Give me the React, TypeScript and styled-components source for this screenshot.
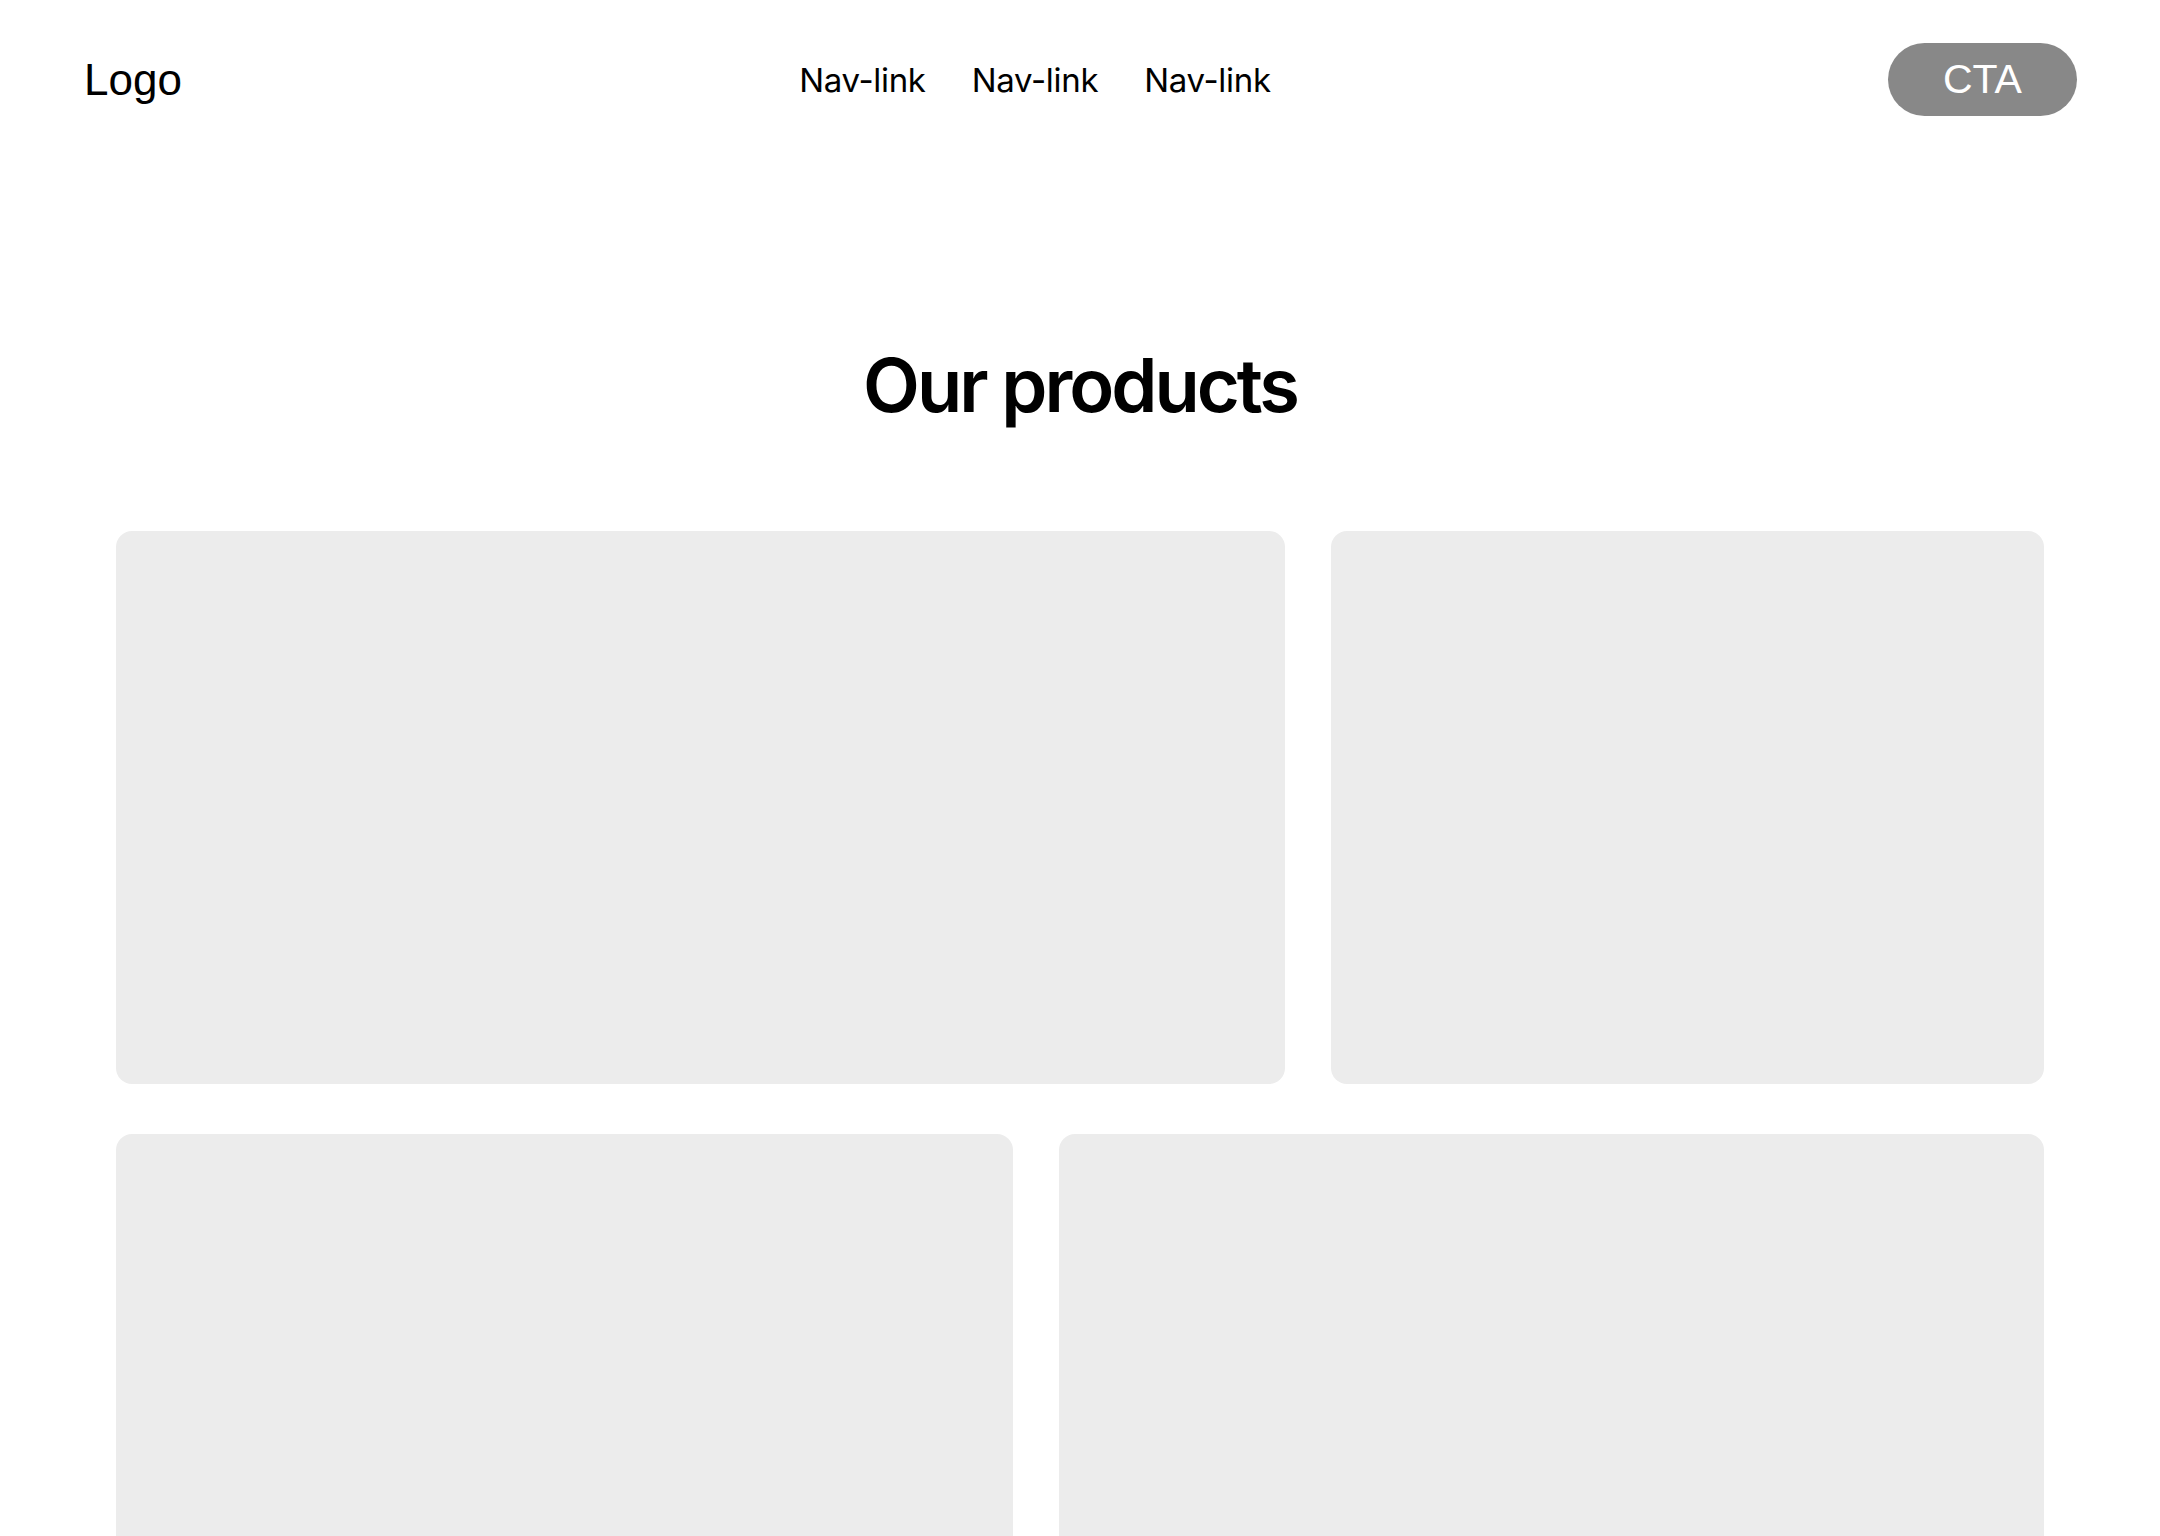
import React from "react";
import styled, { createGlobalStyle } from "styled-components";

const GlobalStyle = createGlobalStyle`
  html, body {
    margin: 0;
    padding: 0;
    background: #fff;
    color: #000;
    font-family: Inter, "Liberation Sans", Arial, sans-serif;
  }
`;

const Page = styled.div`
  width: 2160px;
  height: 1536px;
  overflow: hidden;
`;

const Header = styled.header`
  display: flex;
  justify-content: space-between;
  align-items: center;
  padding: 43px 83px 0 84px;
`;

const Logo = styled.div`
  font-family: "Liberation Sans", Arial, sans-serif;
  font-size: 44px;
  line-height: 1;
`;

const Nav = styled.nav`
  display: flex;
  gap: 46px;
`;

const NavLink = styled.a`
  font-family: Inter, sans-serif;
  font-size: 33px;
  color: #000;
  text-decoration: none;
  letter-spacing: -0.3px;
`;

const Cta = styled.button`
  height: 73px;
  width: 189px;
  border: none;
  border-radius: 37px;
  background: #888888;
  color: #fff;
  font-family: "Liberation Sans", Arial, sans-serif;
  font-size: 41px;
  cursor: pointer;
`;

const Title = styled.h1`
  margin: 224px 0 0;
  text-align: center;
  font-family: Inter, sans-serif;
  font-weight: 600;
  font-size: 74px;
  line-height: 90px;
  letter-spacing: -3px;
`;

const Grid = styled.section`
  display: flex;
  flex-direction: column;
  gap: 50px;
  padding: 0 116px;
  margin-top: 101px;
`;

const Row = styled.div<{ $cols: string }>`
  display: grid;
  grid-template-columns: ${(p) => p.$cols};
  gap: 46px;
`;

const Card = styled.div`
  height: 553px;
  background: #ececec;
  border-radius: 16px;
`;

export default function App() {
  return (
    <Page>
      <GlobalStyle />
      <Header>
        <Logo>Logo</Logo>
        <Nav>
          <NavLink href="#">Nav-link</NavLink>
          <NavLink href="#">Nav-link</NavLink>
          <NavLink href="#">Nav-link</NavLink>
        </Nav>
        <Cta>CTA</Cta>
      </Header>
      <Title>Our products</Title>
      <Grid>
        <Row $cols="1169fr 713fr">
          <Card />
          <Card />
        </Row>
        <Row $cols="897fr 985fr">
          <Card />
          <Card />
        </Row>
      </Grid>
    </Page>
  );
}
